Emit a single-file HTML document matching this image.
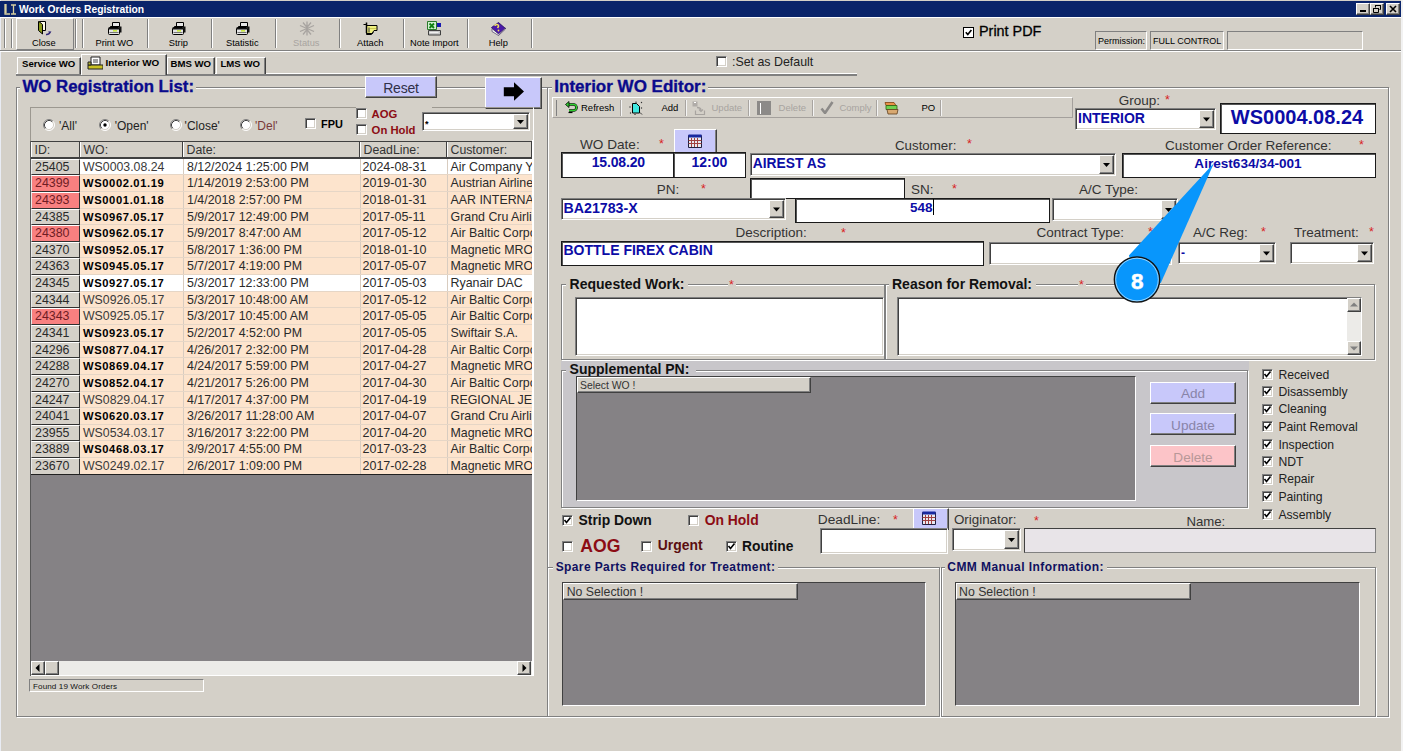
<!DOCTYPE html><html><head><meta charset="utf-8"><style>
html,body{margin:0;padding:0}
body{width:1403px;height:751px;overflow:hidden;position:relative;background:#d4d0c8;font-family:"Liberation Sans",sans-serif}
body div, body span, body svg{position:absolute}
.t{white-space:pre}
</style></head><body>
<div style="left:0px;top:0px;width:1403px;height:751px;background:#d4d0c8"></div>
<div style="left:1401px;top:0px;width:2px;height:751px;background:#f2f2f2"></div>
<div style="left:0px;top:0px;width:1px;height:751px;background:#e9ecf4"></div>
<div style="left:0px;top:1px;width:1401px;height:16px;background:#0a246a"></div>
<svg style="left:3px;top:2px" width="14" height="14"><path d="M2 2v10h5 M3 2v9 M8 3h5 M10.5 3v9 M8 12h5" stroke="#d8d0a0" stroke-width="1.3" fill="none"/></svg>
<span class="t" style="left:19px;top:4px;font-size:10.3px;line-height:12px;font-weight:bold;color:#fff;">Work Orders Registration</span>
<div style="left:1356px;top:3px;width:14px;height:12px;background:#d4d0c8;box-sizing:border-box;border:1px solid;border-color:#fff #404040 #404040 #fff;box-shadow:inset -1px -1px 0 #808080"></div>
<div style="left:1360px;top:10px;width:6px;height:2px;background:#000"></div>
<div style="left:1370px;top:3px;width:14px;height:12px;background:#d4d0c8;box-sizing:border-box;border:1px solid;border-color:#fff #404040 #404040 #fff;box-shadow:inset -1px -1px 0 #808080"></div>
<svg style="left:1370px;top:3px" width="14" height="12"><path d="M5.5 2.5h5v4h-1 M5.5 2.5v2 M3.5 5.5h5v4h-5z" stroke="#000" stroke-width="1" fill="none"/><path d="M5 2h6v1h-6z M3 5h6v1h-6z" fill="#000"/></svg>
<div style="left:1386px;top:3px;width:14px;height:12px;background:#d4d0c8;box-sizing:border-box;border:1px solid;border-color:#fff #404040 #404040 #fff;box-shadow:inset -1px -1px 0 #808080"></div>
<svg style="left:1386px;top:3px" width="14" height="12"><path d="M4 3l6 6 M10 3l-6 6" stroke="#000" stroke-width="1.6"/></svg>
<div style="left:0px;top:17px;width:1401px;height:1px;background:#fff"></div>
<div style="left:0px;top:50px;width:1401px;height:1px;background:#808080"></div>
<div style="left:0px;top:51px;width:1401px;height:1px;background:#fff"></div>
<div style="left:4px;top:19px;width:1px;height:29px;background:#808080"></div>
<div style="left:5px;top:19px;width:1px;height:29px;background:#fff"></div>
<div style="left:11px;top:19px;width:1px;height:29px;background:#808080"></div>
<div style="left:12px;top:19px;width:1px;height:29px;background:#fff"></div>
<div style="left:16px;top:18px;width:58px;height:32px;box-sizing:border-box;border:1px solid;border-color:#fff #808080 #808080 #fff"></div>
<div style="left:75px;top:19px;width:1px;height:29px;background:#808080"></div>
<div style="left:76px;top:19px;width:1px;height:29px;background:#fff"></div>
<div style="left:82px;top:19px;width:1px;height:29px;background:#808080"></div>
<div style="left:83px;top:19px;width:1px;height:29px;background:#fff"></div>
<div style="left:147px;top:19px;width:1px;height:29px;background:#808080"></div>
<div style="left:148px;top:19px;width:1px;height:29px;background:#fff"></div>
<div style="left:211px;top:19px;width:1px;height:29px;background:#808080"></div>
<div style="left:212px;top:19px;width:1px;height:29px;background:#fff"></div>
<div style="left:275px;top:19px;width:1px;height:29px;background:#808080"></div>
<div style="left:276px;top:19px;width:1px;height:29px;background:#fff"></div>
<div style="left:339px;top:19px;width:1px;height:29px;background:#808080"></div>
<div style="left:340px;top:19px;width:1px;height:29px;background:#fff"></div>
<div style="left:403px;top:19px;width:1px;height:29px;background:#808080"></div>
<div style="left:404px;top:19px;width:1px;height:29px;background:#fff"></div>
<div style="left:467px;top:19px;width:1px;height:29px;background:#808080"></div>
<div style="left:468px;top:19px;width:1px;height:29px;background:#fff"></div>
<div style="left:531px;top:19px;width:1px;height:29px;background:#808080"></div>
<div style="left:532px;top:19px;width:1px;height:29px;background:#fff"></div>
<span class="t" style="left:-156.2px;width:400px;text-align:center;top:38px;font-size:9.3px;line-height:11px;font-weight:normal;color:#000;">Close</span>
<span class="t" style="left:-85.7px;width:400px;text-align:center;top:38px;font-size:9.3px;line-height:11px;font-weight:normal;color:#000;">Print WO</span>
<span class="t" style="left:-21.69999999999999px;width:400px;text-align:center;top:38px;font-size:9.3px;line-height:11px;font-weight:normal;color:#000;">Strip</span>
<span class="t" style="left:42.30000000000001px;width:400px;text-align:center;top:38px;font-size:9.3px;line-height:11px;font-weight:normal;color:#000;">Statistic</span>
<span class="t" style="left:106.30000000000001px;width:400px;text-align:center;top:38px;font-size:9.3px;line-height:11px;font-weight:normal;color:#a8a4a0;">Status</span>
<span class="t" style="left:170.3px;width:400px;text-align:center;top:38px;font-size:9.3px;line-height:11px;font-weight:normal;color:#000;">Attach</span>
<span class="t" style="left:234.3px;width:400px;text-align:center;top:38px;font-size:9.3px;line-height:11px;font-weight:normal;color:#000;">Note Import</span>
<span class="t" style="left:298.3px;width:400px;text-align:center;top:38px;font-size:9.3px;line-height:11px;font-weight:normal;color:#000;">Help</span>
<svg style="left:37px;top:20px" width="16" height="16"><path d="M2.5 1.5h6v9h-6z" fill="#fffbe8" stroke="#000"/><path d="M2 1.5 L5.5 4.5 V14 L1.5 10.5 V1.5z" fill="#8a9a18" stroke="#000"/><path d="M9 14.5c2.2 0.3 3.8-0.8 3.8-2.8" stroke="#302878" stroke-width="1.6" fill="none"/><path d="M11 11.5h3.5l-1.7 2z" fill="#302878"/></svg>
<svg style="left:107px;top:21px" width="16" height="15"><path d="M5.5 1.5h7v4h-7z" fill="#e8e8e8" stroke="#000"/><path d="M3.5 5.5h9l1 1.5h-11z" fill="#8a8a8a" stroke="#000"/><rect x="1.5" y="6.5" width="11" height="7" rx="1" fill="#e4e4e4" stroke="#000"/><path d="M2 7h10v1.5h-10z" fill="#111"/><path d="M6 9h4v1.6h-4z" fill="#c8e840"/><path d="M2.5 11.5h9" stroke="#777"/><path d="M12.5 5.5h2v6h-2z" fill="#111"/></svg>
<svg style="left:171px;top:21px" width="16" height="15"><path d="M5.5 1.5h7v4h-7z" fill="#e8e8e8" stroke="#000"/><path d="M3.5 5.5h9l1 1.5h-11z" fill="#8a8a8a" stroke="#000"/><rect x="1.5" y="6.5" width="11" height="7" rx="1" fill="#e4e4e4" stroke="#000"/><path d="M2 7h10v1.5h-10z" fill="#111"/><path d="M6 9h4v1.6h-4z" fill="#c8e840"/><path d="M2.5 11.5h9" stroke="#777"/><path d="M12.5 5.5h2v6h-2z" fill="#111"/></svg>
<svg style="left:235px;top:21px" width="16" height="15"><path d="M5.5 1.5h7v4h-7z" fill="#e8e8e8" stroke="#000"/><path d="M3.5 5.5h9l1 1.5h-11z" fill="#8a8a8a" stroke="#000"/><rect x="1.5" y="6.5" width="11" height="7" rx="1" fill="#e4e4e4" stroke="#000"/><path d="M2 7h10v1.5h-10z" fill="#111"/><path d="M6 9h4v1.6h-4z" fill="#c8e840"/><path d="M2.5 11.5h9" stroke="#777"/><path d="M12.5 5.5h2v6h-2z" fill="#111"/></svg>
<svg style="left:299px;top:21px" width="16" height="15"><path d="M8 0.5v14 M1 4.5l14 6 M15 4.5l-14 6 M4 1.5l4 5 4-5 M4 13.5l4-5 4 5" stroke="#a8a4a0" stroke-width="1.3" fill="none"/></svg>
<svg style="left:363px;top:21px" width="15" height="15"><path d="M0.5 3.5h3v10h5l2-2" fill="#d8d8c0" stroke="#000"/><path d="M3.5 4.5h10.5v5h-3l-2 3h-5.5z" fill="#f0f080" stroke="#000"/><path d="M3.5 1.5v10.5" stroke="#000" stroke-width="1.5"/><path d="M6 6.5v5" stroke="#707050" stroke-width="1.5"/><path d="M7 7.5h6" stroke="#c8c850"/></svg>
<svg style="left:427px;top:21px" width="15" height="15"><path d="M1.5 9.5h12v4.5h-12z" fill="#c8c8c8" stroke="#404040"/><path d="M2.5 11.5h9" stroke="#f0f0f0"/><path d="M9 2h5v4h-5z" fill="#1818b0"/><path d="M0.5 0.5h9v8h-9z" fill="#d0f0d0" stroke="#2a7a2a"/><path d="M2.5 2.5l4.5 4.5 M7 2.5l-4.5 4.5" stroke="#108010" stroke-width="1.8"/></svg>
<svg style="left:491px;top:21px" width="16" height="15"><path d="M0.5 6.5l7-5 7 6-7 6.5z" fill="#4a18a8" stroke="#200860" stroke-width="0.8"/><path d="M1 7.5v3l6.5 4 7-6.5v-1l-7 6z" fill="#f0f0f0" stroke="#302050" stroke-width="0.6"/><path d="M4 5c0-2 4-2 3.5 0.5l-1 1.5" stroke="#f0e060" stroke-width="1.5" fill="none"/><circle cx="7.5" cy="9.5" r="0.9" fill="#f0e060"/></svg>
<div style="left:963px;top:27px;width:11px;height:11px;box-sizing:border-box;border:1.5px solid #000;background:#fff"></div>
<svg style="left:963px;top:27px" width="11" height="11"><path d="M2.8 5.2 L4.8 7.6 L8.4 3" stroke="#000" stroke-width="1.6" fill="none"/></svg>
<span class="t" style="left:979px;top:23px;font-size:14.4px;line-height:17px;font-weight:normal;color:#000;-webkit-text-stroke:0.3px #000">Print PDF</span>
<div style="left:1095px;top:31px;width:52px;height:19px;box-sizing:border-box;border:1px solid;border-color:#808080 #fff #fff #808080"></div>
<span class="t" style="left:1098px;top:36px;font-size:9px;line-height:11px;font-weight:normal;color:#000;">Permission:</span>
<div style="left:1150px;top:31px;width:74px;height:19px;box-sizing:border-box;border:1px solid;border-color:#808080 #fff #fff #808080"></div>
<span class="t" style="left:1153px;top:36px;font-size:9px;line-height:11px;font-weight:normal;color:#000;">FULL CONTROL</span>
<div style="left:1227px;top:31px;width:136px;height:19px;box-sizing:border-box;border:1px solid;border-color:#808080 #fff #fff #808080"></div>
<div style="left:16px;top:73px;width:841px;height:1px;background:#fff"></div>
<div style="left:16px;top:74px;width:841px;height:2px;background:#808080"></div>
<div style="left:17px;top:57px;width:64px;height:17px;background:#d4d0c8;box-sizing:border-box;border:1px solid;border-bottom:none;border-color:#fff #404040 #404040 #fff;box-shadow:inset -1px 0 0 #808080"></div>
<div style="left:167px;top:57px;width:48px;height:17px;background:#d4d0c8;box-sizing:border-box;border:1px solid;border-bottom:none;border-color:#fff #404040 #404040 #fff;box-shadow:inset -1px 0 0 #808080"></div>
<div style="left:216px;top:57px;width:50px;height:17px;background:#d4d0c8;box-sizing:border-box;border:1px solid;border-bottom:none;border-color:#fff #404040 #404040 #fff;box-shadow:inset -1px 0 0 #808080"></div>
<div style="left:81px;top:54px;width:86px;height:21px;background:#d4d0c8;box-sizing:border-box;border:1px solid;border-bottom:none;border-color:#fff #404040 #404040 #fff;box-shadow:inset -1px 0 0 #808080"></div>
<span class="t" style="left:22px;top:58px;font-size:9.6px;line-height:12px;font-weight:bold;color:#000;">Service WO</span>
<span class="t" style="left:105.5px;top:57px;font-size:9.9px;line-height:12px;font-weight:bold;color:#000;">Interior WO</span>
<span class="t" style="left:170.5px;top:58px;font-size:9.6px;line-height:12px;font-weight:bold;color:#000;">BMS WO</span>
<span class="t" style="left:220.5px;top:58px;font-size:9.6px;line-height:12px;font-weight:bold;color:#000;">LMS WO</span>
<svg style="left:87px;top:56px" width="16" height="15"><path d="M4 1h9v8h-9z" fill="#fff" stroke="#202020"/><path d="M6 3h5v4h-5z" fill="#a0a0a0"/><path d="M1 9h15v4h-15z" fill="#c8c020" stroke="#202020"/><path d="M1 6h3v3h-3z" fill="#b0b030" stroke="#202020"/></svg>
<div style="left:716px;top:56px;width:11px;height:11px;background:#fff;box-sizing:border-box;border:1px solid;border-color:#808080 #fff #fff #808080;box-shadow:inset 1px 1px 0 #404040, inset -1px -1px 0 #d4d0c8"></div>
<span class="t" style="left:732px;top:55px;font-size:12.4px;line-height:15px;font-weight:normal;color:#222;">:Set as Default</span>
<div style="left:16px;top:87px;width:532px;height:630px;box-sizing:border-box;border:1px solid #808080;box-shadow:1px 1px 0 #fff, inset 1px 1px 0 #fff"></div>
<div style="left:20px;top:76px;width:176px;height:16px;background:#d4d0c8"></div>
<span class="t" style="left:22.5px;top:77px;font-size:16.8px;line-height:20px;font-weight:bold;color:#0a0a8c;-webkit-text-stroke:0.35px #0a0a8c">WO Registration List:</span>
<div style="left:365px;top:76px;width:72px;height:22px;background:#c8c8fa;box-sizing:border-box;border:1px solid;border-color:#fff #404040 #404040 #fff;box-shadow:inset -1px -1px 0 #808080"></div>
<span class="t" style="left:201px;width:400px;text-align:center;top:80px;font-size:14px;line-height:17px;font-weight:normal;color:#303048;letter-spacing:-0.2px">Reset</span>
<div style="left:485px;top:77px;width:57px;height:32px;background:#c8c8fa;box-sizing:border-box;border:1px solid;border-color:#fff #404040 #404040 #fff;box-shadow:inset -1px -1px 0 #808080"></div>
<svg style="left:500px;top:82px" width="26" height="22"><path d="M3.8 5.2h10.2v-5l10 9.4-10 9.2v-4.6h-10.2z" fill="#000"/></svg>
<div style="left:30px;top:107px;width:504px;height:569px;box-sizing:border-box;border:1px solid;border-color:#9c9890 #fff #fff #9c9890"></div>
<svg style="left:43px;top:119px" width="12" height="12"><circle cx="6" cy="6" r="5" fill="#fff"/><path d="M2.11 9.89 A5.5 5.5 0 0 1 9.89 2.11" stroke="#808080" fill="none"/><path d="M9.89 2.11 A5.5 5.5 0 0 1 2.11 9.89" stroke="#fff" fill="none"/><path d="M2.82 9.18 A4.5 4.5 0 0 1 9.18 2.82" stroke="#404040" fill="none"/><path d="M9.18 2.82 A4.5 4.5 0 0 1 2.82 9.18" stroke="#d4d0c8" fill="none"/></svg>
<span class="t" style="left:59px;top:119px;font-size:12px;line-height:14px;font-weight:normal;color:#222;">'All'</span>
<svg style="left:99px;top:119px" width="12" height="12"><circle cx="6" cy="6" r="5" fill="#fff"/><path d="M2.11 9.89 A5.5 5.5 0 0 1 9.89 2.11" stroke="#808080" fill="none"/><path d="M9.89 2.11 A5.5 5.5 0 0 1 2.11 9.89" stroke="#fff" fill="none"/><path d="M2.82 9.18 A4.5 4.5 0 0 1 9.18 2.82" stroke="#404040" fill="none"/><path d="M9.18 2.82 A4.5 4.5 0 0 1 2.82 9.18" stroke="#d4d0c8" fill="none"/><circle cx="6" cy="6" r="1.7" fill="#000"/></svg>
<span class="t" style="left:114.7px;top:119px;font-size:12px;line-height:14px;font-weight:normal;color:#222;">'Open'</span>
<svg style="left:170px;top:119px" width="12" height="12"><circle cx="6" cy="6" r="5" fill="#fff"/><path d="M2.11 9.89 A5.5 5.5 0 0 1 9.89 2.11" stroke="#808080" fill="none"/><path d="M9.89 2.11 A5.5 5.5 0 0 1 2.11 9.89" stroke="#fff" fill="none"/><path d="M2.82 9.18 A4.5 4.5 0 0 1 9.18 2.82" stroke="#404040" fill="none"/><path d="M9.18 2.82 A4.5 4.5 0 0 1 2.82 9.18" stroke="#d4d0c8" fill="none"/></svg>
<span class="t" style="left:184.6px;top:119px;font-size:12px;line-height:14px;font-weight:normal;color:#222;">'Close'</span>
<svg style="left:240px;top:119px" width="12" height="12"><circle cx="6" cy="6" r="5" fill="#fff"/><path d="M2.11 9.89 A5.5 5.5 0 0 1 9.89 2.11" stroke="#808080" fill="none"/><path d="M9.89 2.11 A5.5 5.5 0 0 1 2.11 9.89" stroke="#fff" fill="none"/><path d="M2.82 9.18 A4.5 4.5 0 0 1 9.18 2.82" stroke="#404040" fill="none"/><path d="M9.18 2.82 A4.5 4.5 0 0 1 2.82 9.18" stroke="#d4d0c8" fill="none"/></svg>
<span class="t" style="left:255px;top:119px;font-size:12px;line-height:14px;font-weight:normal;color:#7a3a3a;">'Del'</span>
<div style="left:356px;top:106px;width:76px;height:2px;background:#d4d0c8"></div>
<div style="left:305px;top:118px;width:11px;height:11px;background:#fff;box-sizing:border-box;border:1px solid;border-color:#808080 #fff #fff #808080;box-shadow:inset 1px 1px 0 #404040, inset -1px -1px 0 #d4d0c8"></div>
<span class="t" style="left:321px;top:118px;font-size:10.9px;line-height:13px;font-weight:bold;color:#000;">FPU</span>
<div style="left:356px;top:108px;width:11px;height:11px;background:#fff;box-sizing:border-box;border:1px solid;border-color:#808080 #fff #fff #808080;box-shadow:inset 1px 1px 0 #404040, inset -1px -1px 0 #d4d0c8"></div>
<span class="t" style="left:371.6px;top:108px;font-size:11.3px;line-height:13px;font-weight:bold;color:#8c0c14;">AOG</span>
<div style="left:356px;top:124px;width:11px;height:11px;background:#fff;box-sizing:border-box;border:1px solid;border-color:#808080 #fff #fff #808080;box-shadow:inset 1px 1px 0 #404040, inset -1px -1px 0 #d4d0c8"></div>
<span class="t" style="left:371.6px;top:124px;font-size:11.3px;line-height:13px;font-weight:bold;color:#8c0c14;">On Hold</span>
<div style="left:422px;top:112px;width:108px;height:19px;background:#fff;box-sizing:border-box;border:1px solid;border-color:#808080 #fff #fff #808080;box-shadow:inset 1px 1px 0 #404040, inset -1px -1px 0 #d4d0c8"></div>
<div style="left:513px;top:114px;width:15px;height:15px;background:#d4d0c8;box-sizing:border-box;border:1px solid;border-color:#fff #404040 #404040 #fff;box-shadow:inset -1px -1px 0 #808080"></div>
<svg style="left:513px;top:114px" width="15" height="15"><path d="M4.0 6.0 h7 l-3.5 4 z" fill="#000"/></svg>
<span class="t" style="left:425px;top:119px;font-size:9px;line-height:11px;font-weight:bold;color:#000;">*</span>
<div style="left:31px;top:141px;width:501px;height:17px;background:#d4d0c8"></div>
<div style="left:31px;top:141px;width:501px;height:1px;background:#404040"></div>
<div style="left:31px;top:142px;width:49px;height:16px;box-sizing:border-box;border-left:1px solid #fff;border-right:1px solid #404040"></div>
<span class="t" style="left:34.5px;top:143px;font-size:12.3px;line-height:15px;font-weight:normal;color:#333;">ID:</span>
<div style="left:80px;top:142px;width:103px;height:16px;box-sizing:border-box;border-left:1px solid #fff;border-right:1px solid #404040"></div>
<span class="t" style="left:83.5px;top:143px;font-size:12.3px;line-height:15px;font-weight:normal;color:#333;">WO:</span>
<div style="left:183px;top:142px;width:177px;height:16px;box-sizing:border-box;border-left:1px solid #fff;border-right:1px solid #404040"></div>
<span class="t" style="left:186.5px;top:143px;font-size:12.3px;line-height:15px;font-weight:normal;color:#333;">Date:</span>
<div style="left:360px;top:142px;width:87px;height:16px;box-sizing:border-box;border-left:1px solid #fff;border-right:1px solid #404040"></div>
<span class="t" style="left:363.5px;top:143px;font-size:12.3px;line-height:15px;font-weight:normal;color:#333;">DeadLine:</span>
<div style="left:447px;top:142px;width:85px;height:16px;box-sizing:border-box;border-left:1px solid #fff;border-right:1px solid #404040"></div>
<span class="t" style="left:450.5px;top:143px;font-size:12.3px;line-height:15px;font-weight:normal;color:#333;">Customer:</span>
<div style="left:31px;top:157px;width:501px;height:2px;background:#404040"></div>
<div style="left:31px;top:159px;width:501px;height:16px;background:#fff"></div>
<div style="left:31px;top:159px;width:49px;height:16px;background:#d4d0c8;box-sizing:border-box;border-top:1px solid #fff;border-left:1px solid #e8e8e8;border-bottom:1px solid #303030;border-right:1px solid #303030"></div>
<div style="left:183px;top:159px;width:1px;height:16px;background:#d8ccc0"></div>
<div style="left:360px;top:159px;width:1px;height:16px;background:#d8ccc0"></div>
<div style="left:447px;top:159px;width:1px;height:16px;background:#d8ccc0"></div>
<div style="left:80px;top:174px;width:452px;height:1px;background:#e6d6c6"></div>
<span class="t" style="left:35px;top:160px;font-size:12.4px;line-height:15px;font-weight:normal;color:#2a2a2a;">25405</span>
<span class="t" style="left:83px;top:160px;font-size:12.3px;line-height:15px;font-weight:normal;color:#3a3a3a;">WS0003.08.24</span>
<span class="t" style="left:187px;top:160px;font-size:12.4px;line-height:15px;font-weight:normal;color:#2a2a2a;">8/12/2024 1:25:00 PM</span>
<span class="t" style="left:362.5px;top:160px;font-size:12.5px;line-height:15px;font-weight:normal;color:#2a2a2a;">2024-08-31</span>
<span class="t" style="left:450.5px;top:160px;font-size:12.4px;line-height:15px;font-weight:normal;color:#2a2a2a;">Air Company Y</span>
<div style="left:31px;top:175px;width:501px;height:17px;background:#fde4cd"></div>
<div style="left:31px;top:175px;width:49px;height:17px;background:#f88080;box-sizing:border-box;border-top:1px solid #fff;border-left:1px solid #e8e8e8;border-bottom:1px solid #303030;border-right:1px solid #303030"></div>
<div style="left:183px;top:175px;width:1px;height:17px;background:#d8ccc0"></div>
<div style="left:360px;top:175px;width:1px;height:17px;background:#d8ccc0"></div>
<div style="left:447px;top:175px;width:1px;height:17px;background:#d8ccc0"></div>
<div style="left:80px;top:191px;width:452px;height:1px;background:#e6d6c6"></div>
<span class="t" style="left:35px;top:176px;font-size:12.4px;line-height:15px;font-weight:normal;color:#6e1c24;">24399</span>
<span class="t" style="left:83px;top:177px;font-size:11.2px;line-height:13px;font-weight:bold;color:#000;letter-spacing:0.62px">WS0002.01.19</span>
<span class="t" style="left:187px;top:176px;font-size:12.4px;line-height:15px;font-weight:normal;color:#2a2a2a;">1/14/2019 2:53:00 PM</span>
<span class="t" style="left:362.5px;top:176px;font-size:12.5px;line-height:15px;font-weight:normal;color:#2a2a2a;">2019-01-30</span>
<span class="t" style="left:450.5px;top:176px;font-size:12.4px;line-height:15px;font-weight:normal;color:#2a2a2a;">Austrian Airline</span>
<div style="left:31px;top:192px;width:501px;height:17px;background:#fde4cd"></div>
<div style="left:31px;top:192px;width:49px;height:17px;background:#f88080;box-sizing:border-box;border-top:1px solid #fff;border-left:1px solid #e8e8e8;border-bottom:1px solid #303030;border-right:1px solid #303030"></div>
<div style="left:183px;top:192px;width:1px;height:17px;background:#d8ccc0"></div>
<div style="left:360px;top:192px;width:1px;height:17px;background:#d8ccc0"></div>
<div style="left:447px;top:192px;width:1px;height:17px;background:#d8ccc0"></div>
<div style="left:80px;top:208px;width:452px;height:1px;background:#e6d6c6"></div>
<span class="t" style="left:35px;top:193px;font-size:12.4px;line-height:15px;font-weight:normal;color:#6e1c24;">24393</span>
<span class="t" style="left:83px;top:194px;font-size:11.2px;line-height:13px;font-weight:bold;color:#000;letter-spacing:0.62px">WS0001.01.18</span>
<span class="t" style="left:187px;top:193px;font-size:12.4px;line-height:15px;font-weight:normal;color:#2a2a2a;">1/4/2018 2:57:00 PM</span>
<span class="t" style="left:362.5px;top:193px;font-size:12.5px;line-height:15px;font-weight:normal;color:#2a2a2a;">2018-01-31</span>
<span class="t" style="left:450.5px;top:193px;font-size:12.4px;line-height:15px;font-weight:normal;color:#2a2a2a;">AAR INTERNAT</span>
<div style="left:31px;top:209px;width:501px;height:16px;background:#fde4cd"></div>
<div style="left:31px;top:209px;width:49px;height:16px;background:#d4d0c8;box-sizing:border-box;border-top:1px solid #fff;border-left:1px solid #e8e8e8;border-bottom:1px solid #303030;border-right:1px solid #303030"></div>
<div style="left:183px;top:209px;width:1px;height:16px;background:#d8ccc0"></div>
<div style="left:360px;top:209px;width:1px;height:16px;background:#d8ccc0"></div>
<div style="left:447px;top:209px;width:1px;height:16px;background:#d8ccc0"></div>
<div style="left:80px;top:224px;width:452px;height:1px;background:#e6d6c6"></div>
<span class="t" style="left:35px;top:210px;font-size:12.4px;line-height:15px;font-weight:normal;color:#2a2a2a;">24385</span>
<span class="t" style="left:83px;top:211px;font-size:11.2px;line-height:13px;font-weight:bold;color:#000;letter-spacing:0.62px">WS0967.05.17</span>
<span class="t" style="left:187px;top:210px;font-size:12.4px;line-height:15px;font-weight:normal;color:#2a2a2a;">5/9/2017 12:49:00 PM</span>
<span class="t" style="left:362.5px;top:210px;font-size:12.5px;line-height:15px;font-weight:normal;color:#2a2a2a;">2017-05-11</span>
<span class="t" style="left:450.5px;top:210px;font-size:12.4px;line-height:15px;font-weight:normal;color:#2a2a2a;">Grand Cru Airli</span>
<div style="left:31px;top:225px;width:501px;height:17px;background:#fde4cd"></div>
<div style="left:31px;top:225px;width:49px;height:17px;background:#f88080;box-sizing:border-box;border-top:1px solid #fff;border-left:1px solid #e8e8e8;border-bottom:1px solid #303030;border-right:1px solid #303030"></div>
<div style="left:183px;top:225px;width:1px;height:17px;background:#d8ccc0"></div>
<div style="left:360px;top:225px;width:1px;height:17px;background:#d8ccc0"></div>
<div style="left:447px;top:225px;width:1px;height:17px;background:#d8ccc0"></div>
<div style="left:80px;top:241px;width:452px;height:1px;background:#e6d6c6"></div>
<span class="t" style="left:35px;top:226px;font-size:12.4px;line-height:15px;font-weight:normal;color:#6e1c24;">24380</span>
<span class="t" style="left:83px;top:227px;font-size:11.2px;line-height:13px;font-weight:bold;color:#000;letter-spacing:0.62px">WS0962.05.17</span>
<span class="t" style="left:187px;top:226px;font-size:12.4px;line-height:15px;font-weight:normal;color:#2a2a2a;">5/9/2017 8:47:00 AM</span>
<span class="t" style="left:362.5px;top:226px;font-size:12.5px;line-height:15px;font-weight:normal;color:#2a2a2a;">2017-05-12</span>
<span class="t" style="left:450.5px;top:226px;font-size:12.4px;line-height:15px;font-weight:normal;color:#2a2a2a;">Air Baltic Corpo</span>
<div style="left:31px;top:242px;width:501px;height:16px;background:#fde4cd"></div>
<div style="left:31px;top:242px;width:49px;height:16px;background:#d4d0c8;box-sizing:border-box;border-top:1px solid #fff;border-left:1px solid #e8e8e8;border-bottom:1px solid #303030;border-right:1px solid #303030"></div>
<div style="left:183px;top:242px;width:1px;height:16px;background:#d8ccc0"></div>
<div style="left:360px;top:242px;width:1px;height:16px;background:#d8ccc0"></div>
<div style="left:447px;top:242px;width:1px;height:16px;background:#d8ccc0"></div>
<div style="left:80px;top:257px;width:452px;height:1px;background:#e6d6c6"></div>
<span class="t" style="left:35px;top:243px;font-size:12.4px;line-height:15px;font-weight:normal;color:#2a2a2a;">24370</span>
<span class="t" style="left:83px;top:244px;font-size:11.2px;line-height:13px;font-weight:bold;color:#000;letter-spacing:0.62px">WS0952.05.17</span>
<span class="t" style="left:187px;top:243px;font-size:12.4px;line-height:15px;font-weight:normal;color:#2a2a2a;">5/8/2017 1:36:00 PM</span>
<span class="t" style="left:362.5px;top:243px;font-size:12.5px;line-height:15px;font-weight:normal;color:#2a2a2a;">2018-01-10</span>
<span class="t" style="left:450.5px;top:243px;font-size:12.4px;line-height:15px;font-weight:normal;color:#2a2a2a;">Magnetic MRO</span>
<div style="left:31px;top:258px;width:501px;height:17px;background:#fde4cd"></div>
<div style="left:31px;top:258px;width:49px;height:17px;background:#d4d0c8;box-sizing:border-box;border-top:1px solid #fff;border-left:1px solid #e8e8e8;border-bottom:1px solid #303030;border-right:1px solid #303030"></div>
<div style="left:183px;top:258px;width:1px;height:17px;background:#d8ccc0"></div>
<div style="left:360px;top:258px;width:1px;height:17px;background:#d8ccc0"></div>
<div style="left:447px;top:258px;width:1px;height:17px;background:#d8ccc0"></div>
<div style="left:80px;top:274px;width:452px;height:1px;background:#e6d6c6"></div>
<span class="t" style="left:35px;top:259px;font-size:12.4px;line-height:15px;font-weight:normal;color:#2a2a2a;">24363</span>
<span class="t" style="left:83px;top:260px;font-size:11.2px;line-height:13px;font-weight:bold;color:#000;letter-spacing:0.62px">WS0945.05.17</span>
<span class="t" style="left:187px;top:259px;font-size:12.4px;line-height:15px;font-weight:normal;color:#2a2a2a;">5/7/2017 4:19:00 PM</span>
<span class="t" style="left:362.5px;top:259px;font-size:12.5px;line-height:15px;font-weight:normal;color:#2a2a2a;">2017-05-07</span>
<span class="t" style="left:450.5px;top:259px;font-size:12.4px;line-height:15px;font-weight:normal;color:#2a2a2a;">Magnetic MRO</span>
<div style="left:31px;top:275px;width:501px;height:17px;background:#fff"></div>
<div style="left:31px;top:275px;width:49px;height:17px;background:#d4d0c8;box-sizing:border-box;border-top:1px solid #fff;border-left:1px solid #e8e8e8;border-bottom:1px solid #303030;border-right:1px solid #303030"></div>
<div style="left:183px;top:275px;width:1px;height:17px;background:#d8ccc0"></div>
<div style="left:360px;top:275px;width:1px;height:17px;background:#d8ccc0"></div>
<div style="left:447px;top:275px;width:1px;height:17px;background:#d8ccc0"></div>
<div style="left:80px;top:291px;width:452px;height:1px;background:#e6d6c6"></div>
<span class="t" style="left:35px;top:276px;font-size:12.4px;line-height:15px;font-weight:normal;color:#2a2a2a;">24345</span>
<span class="t" style="left:83px;top:277px;font-size:11.2px;line-height:13px;font-weight:bold;color:#000;letter-spacing:0.62px">WS0927.05.17</span>
<span class="t" style="left:187px;top:276px;font-size:12.4px;line-height:15px;font-weight:normal;color:#2a2a2a;">5/3/2017 12:33:00 PM</span>
<span class="t" style="left:362.5px;top:276px;font-size:12.5px;line-height:15px;font-weight:normal;color:#2a2a2a;">2017-05-03</span>
<span class="t" style="left:450.5px;top:276px;font-size:12.4px;line-height:15px;font-weight:normal;color:#2a2a2a;">Ryanair DAC</span>
<div style="left:31px;top:292px;width:501px;height:16px;background:#fde4cd"></div>
<div style="left:31px;top:292px;width:49px;height:16px;background:#d4d0c8;box-sizing:border-box;border-top:1px solid #fff;border-left:1px solid #e8e8e8;border-bottom:1px solid #303030;border-right:1px solid #303030"></div>
<div style="left:183px;top:292px;width:1px;height:16px;background:#d8ccc0"></div>
<div style="left:360px;top:292px;width:1px;height:16px;background:#d8ccc0"></div>
<div style="left:447px;top:292px;width:1px;height:16px;background:#d8ccc0"></div>
<div style="left:80px;top:307px;width:452px;height:1px;background:#e6d6c6"></div>
<span class="t" style="left:35px;top:293px;font-size:12.4px;line-height:15px;font-weight:normal;color:#2a2a2a;">24344</span>
<span class="t" style="left:83px;top:293px;font-size:12.3px;line-height:15px;font-weight:normal;color:#3a3a3a;">WS0926.05.17</span>
<span class="t" style="left:187px;top:293px;font-size:12.4px;line-height:15px;font-weight:normal;color:#2a2a2a;">5/3/2017 10:48:00 AM</span>
<span class="t" style="left:362.5px;top:293px;font-size:12.5px;line-height:15px;font-weight:normal;color:#2a2a2a;">2017-05-12</span>
<span class="t" style="left:450.5px;top:293px;font-size:12.4px;line-height:15px;font-weight:normal;color:#2a2a2a;">Air Baltic Corpo</span>
<div style="left:31px;top:308px;width:501px;height:17px;background:#fde4cd"></div>
<div style="left:31px;top:308px;width:49px;height:17px;background:#f88080;box-sizing:border-box;border-top:1px solid #fff;border-left:1px solid #e8e8e8;border-bottom:1px solid #303030;border-right:1px solid #303030"></div>
<div style="left:183px;top:308px;width:1px;height:17px;background:#d8ccc0"></div>
<div style="left:360px;top:308px;width:1px;height:17px;background:#d8ccc0"></div>
<div style="left:447px;top:308px;width:1px;height:17px;background:#d8ccc0"></div>
<div style="left:80px;top:324px;width:452px;height:1px;background:#e6d6c6"></div>
<span class="t" style="left:35px;top:309px;font-size:12.4px;line-height:15px;font-weight:normal;color:#6e1c24;">24343</span>
<span class="t" style="left:83px;top:309px;font-size:12.3px;line-height:15px;font-weight:normal;color:#3a3a3a;">WS0925.05.17</span>
<span class="t" style="left:187px;top:309px;font-size:12.4px;line-height:15px;font-weight:normal;color:#2a2a2a;">5/3/2017 10:45:00 AM</span>
<span class="t" style="left:362.5px;top:309px;font-size:12.5px;line-height:15px;font-weight:normal;color:#2a2a2a;">2017-05-05</span>
<span class="t" style="left:450.5px;top:309px;font-size:12.4px;line-height:15px;font-weight:normal;color:#2a2a2a;">Air Baltic Corpo</span>
<div style="left:31px;top:325px;width:501px;height:17px;background:#fde4cd"></div>
<div style="left:31px;top:325px;width:49px;height:17px;background:#d4d0c8;box-sizing:border-box;border-top:1px solid #fff;border-left:1px solid #e8e8e8;border-bottom:1px solid #303030;border-right:1px solid #303030"></div>
<div style="left:183px;top:325px;width:1px;height:17px;background:#d8ccc0"></div>
<div style="left:360px;top:325px;width:1px;height:17px;background:#d8ccc0"></div>
<div style="left:447px;top:325px;width:1px;height:17px;background:#d8ccc0"></div>
<div style="left:80px;top:341px;width:452px;height:1px;background:#e6d6c6"></div>
<span class="t" style="left:35px;top:326px;font-size:12.4px;line-height:15px;font-weight:normal;color:#2a2a2a;">24341</span>
<span class="t" style="left:83px;top:327px;font-size:11.2px;line-height:13px;font-weight:bold;color:#000;letter-spacing:0.62px">WS0923.05.17</span>
<span class="t" style="left:187px;top:326px;font-size:12.4px;line-height:15px;font-weight:normal;color:#2a2a2a;">5/2/2017 4:52:00 PM</span>
<span class="t" style="left:362.5px;top:326px;font-size:12.5px;line-height:15px;font-weight:normal;color:#2a2a2a;">2017-05-05</span>
<span class="t" style="left:450.5px;top:326px;font-size:12.4px;line-height:15px;font-weight:normal;color:#2a2a2a;">Swiftair S.A.</span>
<div style="left:31px;top:342px;width:501px;height:16px;background:#fde4cd"></div>
<div style="left:31px;top:342px;width:49px;height:16px;background:#d4d0c8;box-sizing:border-box;border-top:1px solid #fff;border-left:1px solid #e8e8e8;border-bottom:1px solid #303030;border-right:1px solid #303030"></div>
<div style="left:183px;top:342px;width:1px;height:16px;background:#d8ccc0"></div>
<div style="left:360px;top:342px;width:1px;height:16px;background:#d8ccc0"></div>
<div style="left:447px;top:342px;width:1px;height:16px;background:#d8ccc0"></div>
<div style="left:80px;top:357px;width:452px;height:1px;background:#e6d6c6"></div>
<span class="t" style="left:35px;top:343px;font-size:12.4px;line-height:15px;font-weight:normal;color:#2a2a2a;">24296</span>
<span class="t" style="left:83px;top:344px;font-size:11.2px;line-height:13px;font-weight:bold;color:#000;letter-spacing:0.62px">WS0877.04.17</span>
<span class="t" style="left:187px;top:343px;font-size:12.4px;line-height:15px;font-weight:normal;color:#2a2a2a;">4/26/2017 2:32:00 PM</span>
<span class="t" style="left:362.5px;top:343px;font-size:12.5px;line-height:15px;font-weight:normal;color:#2a2a2a;">2017-04-28</span>
<span class="t" style="left:450.5px;top:343px;font-size:12.4px;line-height:15px;font-weight:normal;color:#2a2a2a;">Air Baltic Corpo</span>
<div style="left:31px;top:358px;width:501px;height:17px;background:#fde4cd"></div>
<div style="left:31px;top:358px;width:49px;height:17px;background:#d4d0c8;box-sizing:border-box;border-top:1px solid #fff;border-left:1px solid #e8e8e8;border-bottom:1px solid #303030;border-right:1px solid #303030"></div>
<div style="left:183px;top:358px;width:1px;height:17px;background:#d8ccc0"></div>
<div style="left:360px;top:358px;width:1px;height:17px;background:#d8ccc0"></div>
<div style="left:447px;top:358px;width:1px;height:17px;background:#d8ccc0"></div>
<div style="left:80px;top:374px;width:452px;height:1px;background:#e6d6c6"></div>
<span class="t" style="left:35px;top:359px;font-size:12.4px;line-height:15px;font-weight:normal;color:#2a2a2a;">24288</span>
<span class="t" style="left:83px;top:360px;font-size:11.2px;line-height:13px;font-weight:bold;color:#000;letter-spacing:0.62px">WS0869.04.17</span>
<span class="t" style="left:187px;top:359px;font-size:12.4px;line-height:15px;font-weight:normal;color:#2a2a2a;">4/24/2017 5:59:00 PM</span>
<span class="t" style="left:362.5px;top:359px;font-size:12.5px;line-height:15px;font-weight:normal;color:#2a2a2a;">2017-04-27</span>
<span class="t" style="left:450.5px;top:359px;font-size:12.4px;line-height:15px;font-weight:normal;color:#2a2a2a;">Magnetic MRO</span>
<div style="left:31px;top:375px;width:501px;height:17px;background:#fde4cd"></div>
<div style="left:31px;top:375px;width:49px;height:17px;background:#d4d0c8;box-sizing:border-box;border-top:1px solid #fff;border-left:1px solid #e8e8e8;border-bottom:1px solid #303030;border-right:1px solid #303030"></div>
<div style="left:183px;top:375px;width:1px;height:17px;background:#d8ccc0"></div>
<div style="left:360px;top:375px;width:1px;height:17px;background:#d8ccc0"></div>
<div style="left:447px;top:375px;width:1px;height:17px;background:#d8ccc0"></div>
<div style="left:80px;top:391px;width:452px;height:1px;background:#e6d6c6"></div>
<span class="t" style="left:35px;top:376px;font-size:12.4px;line-height:15px;font-weight:normal;color:#2a2a2a;">24270</span>
<span class="t" style="left:83px;top:377px;font-size:11.2px;line-height:13px;font-weight:bold;color:#000;letter-spacing:0.62px">WS0852.04.17</span>
<span class="t" style="left:187px;top:376px;font-size:12.4px;line-height:15px;font-weight:normal;color:#2a2a2a;">4/21/2017 5:26:00 PM</span>
<span class="t" style="left:362.5px;top:376px;font-size:12.5px;line-height:15px;font-weight:normal;color:#2a2a2a;">2017-04-30</span>
<span class="t" style="left:450.5px;top:376px;font-size:12.4px;line-height:15px;font-weight:normal;color:#2a2a2a;">Air Baltic Corpo</span>
<div style="left:31px;top:392px;width:501px;height:16px;background:#fde4cd"></div>
<div style="left:31px;top:392px;width:49px;height:16px;background:#d4d0c8;box-sizing:border-box;border-top:1px solid #fff;border-left:1px solid #e8e8e8;border-bottom:1px solid #303030;border-right:1px solid #303030"></div>
<div style="left:183px;top:392px;width:1px;height:16px;background:#d8ccc0"></div>
<div style="left:360px;top:392px;width:1px;height:16px;background:#d8ccc0"></div>
<div style="left:447px;top:392px;width:1px;height:16px;background:#d8ccc0"></div>
<div style="left:80px;top:407px;width:452px;height:1px;background:#e6d6c6"></div>
<span class="t" style="left:35px;top:393px;font-size:12.4px;line-height:15px;font-weight:normal;color:#2a2a2a;">24247</span>
<span class="t" style="left:83px;top:393px;font-size:12.3px;line-height:15px;font-weight:normal;color:#3a3a3a;">WS0829.04.17</span>
<span class="t" style="left:187px;top:393px;font-size:12.4px;line-height:15px;font-weight:normal;color:#2a2a2a;">4/17/2017 4:37:00 PM</span>
<span class="t" style="left:362.5px;top:393px;font-size:12.5px;line-height:15px;font-weight:normal;color:#2a2a2a;">2017-04-19</span>
<span class="t" style="left:450.5px;top:393px;font-size:12.4px;line-height:15px;font-weight:normal;color:#2a2a2a;">REGIONAL JET</span>
<div style="left:31px;top:408px;width:501px;height:17px;background:#fde4cd"></div>
<div style="left:31px;top:408px;width:49px;height:17px;background:#d4d0c8;box-sizing:border-box;border-top:1px solid #fff;border-left:1px solid #e8e8e8;border-bottom:1px solid #303030;border-right:1px solid #303030"></div>
<div style="left:183px;top:408px;width:1px;height:17px;background:#d8ccc0"></div>
<div style="left:360px;top:408px;width:1px;height:17px;background:#d8ccc0"></div>
<div style="left:447px;top:408px;width:1px;height:17px;background:#d8ccc0"></div>
<div style="left:80px;top:424px;width:452px;height:1px;background:#e6d6c6"></div>
<span class="t" style="left:35px;top:409px;font-size:12.4px;line-height:15px;font-weight:normal;color:#2a2a2a;">24041</span>
<span class="t" style="left:83px;top:410px;font-size:11.2px;line-height:13px;font-weight:bold;color:#000;letter-spacing:0.62px">WS0620.03.17</span>
<span class="t" style="left:187px;top:409px;font-size:12.4px;line-height:15px;font-weight:normal;color:#2a2a2a;">3/26/2017 11:28:00 AM</span>
<span class="t" style="left:362.5px;top:409px;font-size:12.5px;line-height:15px;font-weight:normal;color:#2a2a2a;">2017-04-07</span>
<span class="t" style="left:450.5px;top:409px;font-size:12.4px;line-height:15px;font-weight:normal;color:#2a2a2a;">Grand Cru Airli</span>
<div style="left:31px;top:425px;width:501px;height:16px;background:#fde4cd"></div>
<div style="left:31px;top:425px;width:49px;height:16px;background:#d4d0c8;box-sizing:border-box;border-top:1px solid #fff;border-left:1px solid #e8e8e8;border-bottom:1px solid #303030;border-right:1px solid #303030"></div>
<div style="left:183px;top:425px;width:1px;height:16px;background:#d8ccc0"></div>
<div style="left:360px;top:425px;width:1px;height:16px;background:#d8ccc0"></div>
<div style="left:447px;top:425px;width:1px;height:16px;background:#d8ccc0"></div>
<div style="left:80px;top:440px;width:452px;height:1px;background:#e6d6c6"></div>
<span class="t" style="left:35px;top:426px;font-size:12.4px;line-height:15px;font-weight:normal;color:#2a2a2a;">23955</span>
<span class="t" style="left:83px;top:426px;font-size:12.3px;line-height:15px;font-weight:normal;color:#3a3a3a;">WS0534.03.17</span>
<span class="t" style="left:187px;top:426px;font-size:12.4px;line-height:15px;font-weight:normal;color:#2a2a2a;">3/16/2017 3:22:00 PM</span>
<span class="t" style="left:362.5px;top:426px;font-size:12.5px;line-height:15px;font-weight:normal;color:#2a2a2a;">2017-04-20</span>
<span class="t" style="left:450.5px;top:426px;font-size:12.4px;line-height:15px;font-weight:normal;color:#2a2a2a;">Magnetic MRO</span>
<div style="left:31px;top:441px;width:501px;height:17px;background:#fde4cd"></div>
<div style="left:31px;top:441px;width:49px;height:17px;background:#d4d0c8;box-sizing:border-box;border-top:1px solid #fff;border-left:1px solid #e8e8e8;border-bottom:1px solid #303030;border-right:1px solid #303030"></div>
<div style="left:183px;top:441px;width:1px;height:17px;background:#d8ccc0"></div>
<div style="left:360px;top:441px;width:1px;height:17px;background:#d8ccc0"></div>
<div style="left:447px;top:441px;width:1px;height:17px;background:#d8ccc0"></div>
<div style="left:80px;top:457px;width:452px;height:1px;background:#e6d6c6"></div>
<span class="t" style="left:35px;top:442px;font-size:12.4px;line-height:15px;font-weight:normal;color:#2a2a2a;">23889</span>
<span class="t" style="left:83px;top:443px;font-size:11.2px;line-height:13px;font-weight:bold;color:#000;letter-spacing:0.62px">WS0468.03.17</span>
<span class="t" style="left:187px;top:442px;font-size:12.4px;line-height:15px;font-weight:normal;color:#2a2a2a;">3/9/2017 4:55:00 PM</span>
<span class="t" style="left:362.5px;top:442px;font-size:12.5px;line-height:15px;font-weight:normal;color:#2a2a2a;">2017-03-23</span>
<span class="t" style="left:450.5px;top:442px;font-size:12.4px;line-height:15px;font-weight:normal;color:#2a2a2a;">Air Baltic Corpo</span>
<div style="left:31px;top:458px;width:501px;height:17px;background:#fde4cd"></div>
<div style="left:31px;top:458px;width:49px;height:17px;background:#d4d0c8;box-sizing:border-box;border-top:1px solid #fff;border-left:1px solid #e8e8e8;border-bottom:1px solid #303030;border-right:1px solid #303030"></div>
<div style="left:183px;top:458px;width:1px;height:17px;background:#d8ccc0"></div>
<div style="left:360px;top:458px;width:1px;height:17px;background:#d8ccc0"></div>
<div style="left:447px;top:458px;width:1px;height:17px;background:#d8ccc0"></div>
<div style="left:80px;top:474px;width:452px;height:1px;background:#e6d6c6"></div>
<span class="t" style="left:35px;top:459px;font-size:12.4px;line-height:15px;font-weight:normal;color:#2a2a2a;">23670</span>
<span class="t" style="left:83px;top:459px;font-size:12.3px;line-height:15px;font-weight:normal;color:#3a3a3a;">WS0249.02.17</span>
<span class="t" style="left:187px;top:459px;font-size:12.4px;line-height:15px;font-weight:normal;color:#2a2a2a;">2/6/2017 1:09:00 PM</span>
<span class="t" style="left:362.5px;top:459px;font-size:12.5px;line-height:15px;font-weight:normal;color:#2a2a2a;">2017-02-28</span>
<span class="t" style="left:450.5px;top:459px;font-size:12.4px;line-height:15px;font-weight:normal;color:#2a2a2a;">Magnetic MRO</span>
<div style="left:532px;top:140px;width:2px;height:536px;background:#fff"></div>
<div style="left:534px;top:140px;width:12px;height:536px;background:#d4d0c8"></div>
<div style="left:31px;top:474px;width:501px;height:1px;background:#202020"></div>
<div style="left:30px;top:141px;width:1px;height:535px;background:#585858"></div>
<div style="left:31px;top:475px;width:501px;height:186px;background:#858285"></div>
<div style="left:31px;top:661px;width:501px;height:14px;background:#ecebe8"></div>
<div style="left:31px;top:661px;width:14px;height:14px;background:#d4d0c8;box-sizing:border-box;border:1px solid;border-color:#fff #404040 #404040 #fff;box-shadow:inset -1px -1px 0 #808080"></div>
<svg style="left:31px;top:661px" width="14" height="14"><path d="M4.5 7l4-4v8z" fill="#000"/></svg>
<div style="left:45px;top:661px;width:14px;height:14px;background:#d4d0c8;box-sizing:border-box;border:1px solid;border-color:#fff #404040 #404040 #fff;box-shadow:inset -1px -1px 0 #808080"></div>
<div style="left:517px;top:661px;width:14px;height:14px;background:#d4d0c8;box-sizing:border-box;border:1px solid;border-color:#fff #404040 #404040 #fff;box-shadow:inset -1px -1px 0 #808080"></div>
<svg style="left:517px;top:661px" width="14" height="14"><path d="M9.5 7l-4-4v8z" fill="#000"/></svg>
<div style="left:29px;top:679px;width:175px;height:13px;box-sizing:border-box;border:1px solid;border-color:#808080 #fff #fff #808080"></div>
<span class="t" style="left:33px;top:682px;font-size:8.1px;line-height:10px;font-weight:normal;color:#111;letter-spacing:0.1px">Found 19 Work Orders</span>
<div style="left:547px;top:87px;width:842px;height:630px;box-sizing:border-box;border:1px solid #808080;box-shadow:1px 1px 0 #fff, inset 1px 1px 0 #fff"></div>
<div style="left:552px;top:78px;width:156px;height:16px;background:#d4d0c8"></div>
<span class="t" style="left:554.3px;top:77px;font-size:17px;line-height:20px;font-weight:bold;color:#0a0a8c;-webkit-text-stroke:0.35px #0a0a8c">Interior WO Editor:</span>
<div style="left:552px;top:97px;width:521px;height:21px;box-sizing:border-box;border:1px solid;border-color:#fff #a4a09c #a4a09c #fff"></div>
<div style="left:556px;top:100px;width:1px;height:16px;background:#808080"></div>
<div style="left:620px;top:100px;width:1px;height:16px;background:#a8a4a0"></div>
<div style="left:621px;top:100px;width:1px;height:16px;background:#f4f4f4"></div>
<div style="left:685px;top:100px;width:1px;height:16px;background:#a8a4a0"></div>
<div style="left:686px;top:100px;width:1px;height:16px;background:#f4f4f4"></div>
<div style="left:748px;top:100px;width:1px;height:16px;background:#a8a4a0"></div>
<div style="left:749px;top:100px;width:1px;height:16px;background:#f4f4f4"></div>
<div style="left:812px;top:100px;width:1px;height:16px;background:#a8a4a0"></div>
<div style="left:813px;top:100px;width:1px;height:16px;background:#f4f4f4"></div>
<div style="left:876px;top:100px;width:1px;height:16px;background:#a8a4a0"></div>
<div style="left:877px;top:100px;width:1px;height:16px;background:#f4f4f4"></div>
<div style="left:940px;top:100px;width:1px;height:16px;background:#a8a4a0"></div>
<div style="left:941px;top:100px;width:1px;height:16px;background:#f4f4f4"></div>
<span class="t" style="left:581px;top:102px;font-size:9.5px;line-height:11px;font-weight:normal;color:#000;">Refresh</span>
<span class="t" style="left:661.5px;top:102px;font-size:9.5px;line-height:11px;font-weight:normal;color:#000;">Add</span>
<span class="t" style="left:711.5px;top:102px;font-size:9.5px;line-height:11px;font-weight:normal;color:#a8a4a0;">Update</span>
<span class="t" style="left:778.6px;top:102px;font-size:9.5px;line-height:11px;font-weight:normal;color:#a8a4a0;">Delete</span>
<span class="t" style="left:839.4px;top:102px;font-size:9.5px;line-height:11px;font-weight:normal;color:#a8a4a0;">Comply</span>
<span class="t" style="left:921.5px;top:102px;font-size:9.5px;line-height:11px;font-weight:normal;color:#000;">PO</span>
<svg style="left:565px;top:101px" width="14" height="13"><path d="M3 3.5h5.5a3 3 0 0 1 0 6h-4.5" stroke="#000" stroke-width="2.6" fill="none"/><path d="M3 3.5h5.5a3 3 0 0 1 0 6h-4.5" stroke="#30d030" stroke-width="1.4" fill="none"/><path d="M0.5 3.5l3.5-3v6z" fill="#30d030" stroke="#000" stroke-width="0.8"/><path d="M3.5 11.5h4" stroke="#000" stroke-width="1.2"/></svg>
<svg style="left:629px;top:101px" width="14" height="14"><path d="M3.5 2.5h4l3 3v6.5h-7z" fill="#40e8e0" stroke="#000"/><circle cx="1" cy="6" r="0.7" fill="#333"/><circle cx="12.5" cy="1.5" r="0.7" fill="#333"/><circle cx="12.5" cy="7" r="0.7" fill="#333"/><circle cx="1.5" cy="12" r="0.7" fill="#333"/><circle cx="6" cy="13.5" r="0.7" fill="#333"/><path d="M11 11.5l2 2" stroke="#333"/><path d="M7 0.5v2" stroke="#333"/></svg>
<svg style="left:692px;top:101px" width="14" height="14"><path d="M0.5 0.5h5v5h-5z" fill="#b0aca8"/><path d="M2 1.5h2" stroke="#fff"/><path d="M5 6.5c3 0 4 1 4 3" stroke="#a8a4a0" stroke-width="1.4" fill="none"/><path d="M7 8.5l2 2 2-2" stroke="#a8a4a0" stroke-width="1.2" fill="none"/><path d="M3.5 9.5v4h9v-4" stroke="#a8a4a0" stroke-width="1.2" fill="none"/></svg>
<svg style="left:757px;top:101px" width="14" height="14"><path d="M0 0h14v14h-14z" fill="#8c8a88"/><path d="M3 2h1v11h-1z" fill="#fff"/></svg>
<svg style="left:820px;top:101px" width="14" height="13"><path d="M1.5 7.5l3.5 4.5 7.5-11" stroke="#8c8a88" stroke-width="2.6" fill="none"/></svg>
<svg style="left:884px;top:101px" width="15" height="14"><path d="M1 1.5h9l2 3h-10z" fill="#e89048" stroke="#804010" stroke-width="0.8"/><path d="M2 4.5h11v4h-11z" fill="#70d050" stroke="#306010" stroke-width="0.8"/><path d="M3 8.5h11l-1 4.5h-9z" fill="#d8a870" stroke="#604020" stroke-width="0.8"/></svg>
<span class="t" style="left:1118.7px;top:93px;font-size:13.5px;line-height:16px;font-weight:normal;color:#333;">Group:</span>
<div style="left:1075px;top:108px;width:141px;height:22px;background:#fff;box-sizing:border-box;border:1px solid;border-color:#808080 #fff #fff #808080;box-shadow:inset 1px 1px 0 #404040, inset -1px -1px 0 #d4d0c8"></div>
<div style="left:1199px;top:110px;width:15px;height:18px;background:#d4d0c8;box-sizing:border-box;border:1px solid;border-color:#fff #404040 #404040 #fff;box-shadow:inset -1px -1px 0 #808080"></div>
<svg style="left:1199px;top:110px" width="15" height="18"><path d="M4.0 7.5 h7 l-3.5 4 z" fill="#000"/></svg>
<span class="t" style="left:1078px;top:110px;font-size:14px;line-height:17px;font-weight:bold;color:#0c0ca6;">INTERIOR</span>
<div style="left:1220px;top:103px;width:156px;height:31px;background:#fff;box-sizing:border-box;border:1px solid #1a1a1a;box-shadow:inset 1px 1px 0 #555"></div>
<span class="t" style="left:1097px;width:400px;text-align:center;top:106px;font-size:20px;line-height:23px;font-weight:bold;color:#0c0ca6;">WS0004.08.24</span>
<span class="t" style="left:580px;top:137px;font-size:13.6px;line-height:16px;font-weight:normal;color:#333;">WO Date:</span>
<div style="left:674px;top:129px;width:43px;height:25px;background:#c8c8fa;box-sizing:border-box;border:1px solid;border-color:#fff #404040 #404040 #fff;box-shadow:inset -1px -1px 0 #808080"></div>
<svg style="left:688px;top:134px" width="15" height="15"><path d="M0.5 1.5h13v12h-13z" fill="#e8e8f0" stroke="#202040"/><path d="M0.5 0.5h13v3h-13z" fill="#1828a0"/><path d="M3.5 4v9 M6.5 4v9 M9.5 4v9 M0.5 6.5h13 M0.5 9.5h13" stroke="#a04040" stroke-width="1"/></svg>
<div style="left:561px;top:152px;width:113px;height:26px;background:#fff;box-sizing:border-box;border:1px solid #1a1a1a;box-shadow:inset 1px 1px 0 #555"></div>
<div style="left:673px;top:152px;width:73px;height:26px;background:#fff;box-sizing:border-box;border:1px solid #1a1a1a;box-shadow:inset 1px 1px 0 #555"></div>
<span class="t" style="left:418.29999999999995px;width:400px;text-align:center;top:154px;font-size:14px;line-height:17px;font-weight:bold;color:#0c0ca6;letter-spacing:-0.15px">15.08.20</span>
<span class="t" style="left:509.29999999999995px;width:400px;text-align:center;top:154px;font-size:14px;line-height:17px;font-weight:bold;color:#0c0ca6;">12:00</span>
<span class="t" style="left:895px;top:138px;font-size:13.3px;line-height:16px;font-weight:normal;color:#333;">Customer:</span>
<div style="left:750px;top:153px;width:366px;height:23px;background:#fff;box-sizing:border-box;border:1px solid;border-color:#808080 #fff #fff #808080;box-shadow:inset 1px 1px 0 #404040, inset -1px -1px 0 #d4d0c8"></div>
<div style="left:1099px;top:155px;width:15px;height:19px;background:#d4d0c8;box-sizing:border-box;border:1px solid;border-color:#fff #404040 #404040 #fff;box-shadow:inset -1px -1px 0 #808080"></div>
<svg style="left:1099px;top:155px" width="15" height="19"><path d="M4.0 8.0 h7 l-3.5 4 z" fill="#000"/></svg>
<span class="t" style="left:752.8px;top:156px;font-size:13.8px;line-height:16px;font-weight:bold;color:#0c0ca6;">AIREST AS</span>
<span class="t" style="left:1165px;top:138px;font-size:13.5px;line-height:16px;font-weight:normal;color:#333;">Customer Order Reference:</span>
<div style="left:1122px;top:153px;width:254px;height:25px;background:#fff;box-sizing:border-box;border:1px solid #1a1a1a;box-shadow:inset 1px 1px 0 #555"></div>
<span class="t" style="left:1048px;width:400px;text-align:center;top:156px;font-size:13.6px;line-height:16px;font-weight:bold;color:#0c0ca6;">Airest634/34-001</span>
<span class="t" style="left:656.7px;top:182px;font-size:13.5px;line-height:16px;font-weight:normal;color:#333;">PN:</span>
<div style="left:750px;top:178px;width:155px;height:21px;background:#fff;box-sizing:border-box;border:1px solid #1a1a1a;box-shadow:inset 1px 1px 0 #555"></div>
<span class="t" style="left:911px;top:182px;font-size:13.5px;line-height:16px;font-weight:normal;color:#333;">SN:</span>
<span class="t" style="left:1079px;top:182px;font-size:13.5px;line-height:16px;font-weight:normal;color:#333;">A/C Type:</span>
<div style="left:561px;top:198px;width:225px;height:22px;background:#fff;box-sizing:border-box;border:1px solid;border-color:#808080 #fff #fff #808080;box-shadow:inset 1px 1px 0 #404040, inset -1px -1px 0 #d4d0c8"></div>
<div style="left:769px;top:200px;width:15px;height:18px;background:#d4d0c8;box-sizing:border-box;border:1px solid;border-color:#fff #404040 #404040 #fff;box-shadow:inset -1px -1px 0 #808080"></div>
<svg style="left:769px;top:200px" width="15" height="18"><path d="M4.0 7.5 h7 l-3.5 4 z" fill="#000"/></svg>
<span class="t" style="left:563.5px;top:200px;font-size:14.2px;line-height:17px;font-weight:bold;color:#0c0ca6;">BA21783-X</span>
<div style="left:795px;top:198px;width:255px;height:25px;background:#fff;box-sizing:border-box;border:1px solid #1a1a1a;box-shadow:inset 1px 1px 0 #555"></div>
<span class="t" style="left:532.5px;width:400px;text-align:right;top:200px;font-size:13.5px;line-height:16px;font-weight:bold;color:#0c0ca6;">548</span>
<div style="left:933px;top:199px;width:1px;height:16px;background:#000"></div>
<div style="left:1052px;top:198px;width:126px;height:23px;background:#fff;box-sizing:border-box;border:1px solid;border-color:#808080 #fff #fff #808080;box-shadow:inset 1px 1px 0 #404040, inset -1px -1px 0 #d4d0c8"></div>
<div style="left:1161px;top:200px;width:15px;height:19px;background:#d4d0c8;box-sizing:border-box;border:1px solid;border-color:#fff #404040 #404040 #fff;box-shadow:inset -1px -1px 0 #808080"></div>
<svg style="left:1161px;top:200px" width="15" height="19"><path d="M4.0 8.0 h7 l-3.5 4 z" fill="#000"/></svg>
<span class="t" style="left:735.6px;top:225px;font-size:13.5px;line-height:16px;font-weight:normal;color:#333;">Description:</span>
<span class="t" style="left:1036.5px;top:225px;font-size:13.5px;line-height:16px;font-weight:normal;color:#333;">Contract Type:</span>
<span class="t" style="left:1192.9px;top:225px;font-size:13.5px;line-height:16px;font-weight:normal;color:#333;">A/C Reg:</span>
<span class="t" style="left:1294px;top:225px;font-size:13.5px;line-height:16px;font-weight:normal;color:#333;">Treatment:</span>
<div style="left:561px;top:241px;width:423px;height:25px;background:#fff;box-sizing:border-box;border:1px solid #1a1a1a;box-shadow:inset 1px 1px 0 #555"></div>
<span class="t" style="left:563.5px;top:242px;font-size:14px;line-height:17px;font-weight:bold;color:#0c0ca6;">BOTTLE FIREX CABIN</span>
<div style="left:989px;top:242px;width:183px;height:23px;background:#fff;box-sizing:border-box;border:1px solid;border-color:#808080 #fff #fff #808080;box-shadow:inset 1px 1px 0 #404040, inset -1px -1px 0 #d4d0c8"></div>
<div style="left:1155px;top:244px;width:15px;height:19px;background:#d4d0c8;box-sizing:border-box;border:1px solid;border-color:#fff #404040 #404040 #fff;box-shadow:inset -1px -1px 0 #808080"></div>
<svg style="left:1155px;top:244px" width="15" height="19"><path d="M4.0 8.0 h7 l-3.5 4 z" fill="#000"/></svg>
<div style="left:1178px;top:242px;width:98px;height:22px;background:#fff;box-sizing:border-box;border:1px solid;border-color:#808080 #fff #fff #808080;box-shadow:inset 1px 1px 0 #404040, inset -1px -1px 0 #d4d0c8"></div>
<div style="left:1259px;top:244px;width:15px;height:18px;background:#d4d0c8;box-sizing:border-box;border:1px solid;border-color:#fff #404040 #404040 #fff;box-shadow:inset -1px -1px 0 #808080"></div>
<svg style="left:1259px;top:244px" width="15" height="18"><path d="M4.0 7.5 h7 l-3.5 4 z" fill="#000"/></svg>
<span class="t" style="left:1181px;top:246px;font-size:12px;line-height:14px;font-weight:bold;color:#0c0ca6;">-</span>
<div style="left:1290px;top:242px;width:84px;height:22px;background:#fff;box-sizing:border-box;border:1px solid;border-color:#808080 #fff #fff #808080;box-shadow:inset 1px 1px 0 #404040, inset -1px -1px 0 #d4d0c8"></div>
<div style="left:1357px;top:244px;width:15px;height:18px;background:#d4d0c8;box-sizing:border-box;border:1px solid;border-color:#fff #404040 #404040 #fff;box-shadow:inset -1px -1px 0 #808080"></div>
<svg style="left:1357px;top:244px" width="15" height="18"><path d="M4.0 7.5 h7 l-3.5 4 z" fill="#000"/></svg>
<div style="left:561px;top:284px;width:324px;height:76px;box-sizing:border-box;border:1px solid #808080;box-shadow:1px 1px 0 #fff, inset 1px 1px 0 #fff"></div>
<div style="left:566px;top:279px;width:122px;height:14px;background:#d4d0c8"></div>
<span class="t" style="left:569.6px;top:276px;font-size:14px;line-height:17px;font-weight:bold;color:#111;">Requested Work:</span>
<div style="left:575px;top:297px;width:309px;height:59px;background:#fff;box-sizing:border-box;border:1px solid;border-color:#808080 #fff #fff #808080;box-shadow:inset 1px 1px 0 #404040, inset -1px -1px 0 #d4d0c8"></div>
<div style="left:885px;top:284px;width:490px;height:76px;box-sizing:border-box;border:1px solid #808080;box-shadow:1px 1px 0 #fff, inset 1px 1px 0 #fff"></div>
<div style="left:889px;top:279px;width:147px;height:14px;background:#d4d0c8"></div>
<span class="t" style="left:892px;top:276px;font-size:14px;line-height:17px;font-weight:bold;color:#111;">Reason for Removal:</span>
<div style="left:897px;top:297px;width:465px;height:59px;background:#fff;box-sizing:border-box;border:1px solid;border-color:#808080 #fff #fff #808080;box-shadow:inset 1px 1px 0 #404040, inset -1px -1px 0 #d4d0c8"></div>
<div style="left:1347px;top:298px;width:14px;height:57px;background:#ecebe8"></div>
<div style="left:1347px;top:298px;width:14px;height:14px;background:#d4d0c8;box-sizing:border-box;border:1px solid;border-color:#fff #404040 #404040 #fff;box-shadow:inset -1px -1px 0 #808080"></div>
<svg style="left:1347px;top:298px" width="14" height="14"><path d="M7 4.5l-4 4h8z" fill="#808080"/></svg>
<div style="left:1347px;top:341px;width:14px;height:14px;background:#d4d0c8;box-sizing:border-box;border:1px solid;border-color:#fff #404040 #404040 #fff;box-shadow:inset -1px -1px 0 #808080"></div>
<svg style="left:1347px;top:341px" width="14" height="14"><path d="M7 9.5l-4-4h8z" fill="#808080"/></svg>
<div style="left:561px;top:361px;width:688px;height:147px;background:#c8c6ca"></div>
<div style="left:561px;top:370px;width:687px;height:138px;box-sizing:border-box;border:1px solid #808080;box-shadow:1px 1px 0 #fff, inset 1px 1px 0 #fff"></div>
<div style="left:566px;top:363px;width:130px;height:14px;background:#c8c6ca"></div>
<span class="t" style="left:569.6px;top:361px;font-size:14px;line-height:17px;font-weight:bold;color:#111;">Supplemental PN:</span>
<div style="left:576px;top:376px;width:560px;height:125px;background:#858285;box-sizing:border-box;border:1px solid;border-color:#404040 #fff #fff #404040"></div>
<div style="left:577px;top:377px;width:234px;height:16px;background:#d4d0c8;box-sizing:border-box;border:1px solid;border-color:#fff #404040 #404040 #fff;box-shadow:inset -1px -1px 0 #808080"></div>
<span class="t" style="left:580px;top:380px;font-size:10.4px;line-height:12px;font-weight:normal;color:#333;">Select WO !</span>
<div style="left:1150px;top:382px;width:86px;height:22px;background:#c8c8fa;box-sizing:border-box;border:1px solid;border-color:#fff #404040 #404040 #fff;box-shadow:inset -1px -1px 0 #808080"></div>
<span class="t" style="left:993px;width:400px;text-align:center;top:386px;font-size:13.6px;line-height:16px;font-weight:normal;color:#8884a8;">Add</span>
<div style="left:1150px;top:413px;width:86px;height:22px;background:#c8c8fa;box-sizing:border-box;border:1px solid;border-color:#fff #404040 #404040 #fff;box-shadow:inset -1px -1px 0 #808080"></div>
<span class="t" style="left:993px;width:400px;text-align:center;top:418px;font-size:13.6px;line-height:16px;font-weight:normal;color:#8884a8;">Update</span>
<div style="left:1150px;top:445px;width:86px;height:22px;background:#fcc4c8;box-sizing:border-box;border:1px solid;border-color:#fff #404040 #404040 #fff;box-shadow:inset -1px -1px 0 #808080"></div>
<span class="t" style="left:993px;width:400px;text-align:center;top:450px;font-size:13.6px;line-height:16px;font-weight:normal;color:#b89898;">Delete</span>
<div style="left:1262px;top:368.5px;width:11px;height:11px;background:#fff;box-sizing:border-box;border:1px solid;border-color:#808080 #fff #fff #808080;box-shadow:inset 1px 1px 0 #404040, inset -1px -1px 0 #d4d0c8"></div>
<svg style="left:1262px;top:368.5px" width="11" height="11"><path d="M2.5 5 L4.5 7.5 L8.5 2.5" stroke="#000" stroke-width="1.6" fill="none"/></svg>
<span class="t" style="left:1278.4px;top:368px;font-size:12.2px;line-height:15px;font-weight:normal;color:#222;">Received</span>
<div style="left:1262px;top:386.0px;width:11px;height:11px;background:#fff;box-sizing:border-box;border:1px solid;border-color:#808080 #fff #fff #808080;box-shadow:inset 1px 1px 0 #404040, inset -1px -1px 0 #d4d0c8"></div>
<svg style="left:1262px;top:386.0px" width="11" height="11"><path d="M2.5 5 L4.5 7.5 L8.5 2.5" stroke="#000" stroke-width="1.6" fill="none"/></svg>
<span class="t" style="left:1278.4px;top:385px;font-size:12.2px;line-height:15px;font-weight:normal;color:#222;">Disassembly</span>
<div style="left:1262px;top:403.5px;width:11px;height:11px;background:#fff;box-sizing:border-box;border:1px solid;border-color:#808080 #fff #fff #808080;box-shadow:inset 1px 1px 0 #404040, inset -1px -1px 0 #d4d0c8"></div>
<svg style="left:1262px;top:403.5px" width="11" height="11"><path d="M2.5 5 L4.5 7.5 L8.5 2.5" stroke="#000" stroke-width="1.6" fill="none"/></svg>
<span class="t" style="left:1278.4px;top:402px;font-size:12.2px;line-height:15px;font-weight:normal;color:#222;">Cleaning</span>
<div style="left:1262px;top:421.0px;width:11px;height:11px;background:#fff;box-sizing:border-box;border:1px solid;border-color:#808080 #fff #fff #808080;box-shadow:inset 1px 1px 0 #404040, inset -1px -1px 0 #d4d0c8"></div>
<svg style="left:1262px;top:421.0px" width="11" height="11"><path d="M2.5 5 L4.5 7.5 L8.5 2.5" stroke="#000" stroke-width="1.6" fill="none"/></svg>
<span class="t" style="left:1278.4px;top:420px;font-size:12.2px;line-height:15px;font-weight:normal;color:#222;">Paint Removal</span>
<div style="left:1262px;top:438.5px;width:11px;height:11px;background:#fff;box-sizing:border-box;border:1px solid;border-color:#808080 #fff #fff #808080;box-shadow:inset 1px 1px 0 #404040, inset -1px -1px 0 #d4d0c8"></div>
<svg style="left:1262px;top:438.5px" width="11" height="11"><path d="M2.5 5 L4.5 7.5 L8.5 2.5" stroke="#000" stroke-width="1.6" fill="none"/></svg>
<span class="t" style="left:1278.4px;top:438px;font-size:12.2px;line-height:15px;font-weight:normal;color:#222;">Inspection</span>
<div style="left:1262px;top:456.0px;width:11px;height:11px;background:#fff;box-sizing:border-box;border:1px solid;border-color:#808080 #fff #fff #808080;box-shadow:inset 1px 1px 0 #404040, inset -1px -1px 0 #d4d0c8"></div>
<svg style="left:1262px;top:456.0px" width="11" height="11"><path d="M2.5 5 L4.5 7.5 L8.5 2.5" stroke="#000" stroke-width="1.6" fill="none"/></svg>
<span class="t" style="left:1278.4px;top:455px;font-size:12.2px;line-height:15px;font-weight:normal;color:#222;">NDT</span>
<div style="left:1262px;top:473.5px;width:11px;height:11px;background:#fff;box-sizing:border-box;border:1px solid;border-color:#808080 #fff #fff #808080;box-shadow:inset 1px 1px 0 #404040, inset -1px -1px 0 #d4d0c8"></div>
<svg style="left:1262px;top:473.5px" width="11" height="11"><path d="M2.5 5 L4.5 7.5 L8.5 2.5" stroke="#000" stroke-width="1.6" fill="none"/></svg>
<span class="t" style="left:1278.4px;top:472px;font-size:12.2px;line-height:15px;font-weight:normal;color:#222;">Repair</span>
<div style="left:1262px;top:491.0px;width:11px;height:11px;background:#fff;box-sizing:border-box;border:1px solid;border-color:#808080 #fff #fff #808080;box-shadow:inset 1px 1px 0 #404040, inset -1px -1px 0 #d4d0c8"></div>
<svg style="left:1262px;top:491.0px" width="11" height="11"><path d="M2.5 5 L4.5 7.5 L8.5 2.5" stroke="#000" stroke-width="1.6" fill="none"/></svg>
<span class="t" style="left:1278.4px;top:490px;font-size:12.2px;line-height:15px;font-weight:normal;color:#222;">Painting</span>
<div style="left:1262px;top:508.5px;width:11px;height:11px;background:#fff;box-sizing:border-box;border:1px solid;border-color:#808080 #fff #fff #808080;box-shadow:inset 1px 1px 0 #404040, inset -1px -1px 0 #d4d0c8"></div>
<svg style="left:1262px;top:508.5px" width="11" height="11"><path d="M2.5 5 L4.5 7.5 L8.5 2.5" stroke="#000" stroke-width="1.6" fill="none"/></svg>
<span class="t" style="left:1278.4px;top:508px;font-size:12.2px;line-height:15px;font-weight:normal;color:#222;">Assembly</span>
<div style="left:562px;top:515px;width:11px;height:11px;background:#fff;box-sizing:border-box;border:1px solid;border-color:#808080 #fff #fff #808080;box-shadow:inset 1px 1px 0 #404040, inset -1px -1px 0 #d4d0c8"></div>
<svg style="left:562px;top:515px" width="11" height="11"><path d="M2.5 5 L4.5 7.5 L8.5 2.5" stroke="#000" stroke-width="1.6" fill="none"/></svg>
<span class="t" style="left:578.5px;top:512px;font-size:13.9px;line-height:16px;font-weight:bold;color:#111;">Strip Down</span>
<div style="left:688px;top:515px;width:11px;height:11px;background:#fff;box-sizing:border-box;border:1px solid;border-color:#808080 #fff #fff #808080;box-shadow:inset 1px 1px 0 #404040, inset -1px -1px 0 #d4d0c8"></div>
<span class="t" style="left:704.7px;top:512px;font-size:13.9px;line-height:16px;font-weight:bold;color:#8c0c14;">On Hold</span>
<div style="left:562px;top:541px;width:11px;height:11px;background:#fff;box-sizing:border-box;border:1px solid;border-color:#808080 #fff #fff #808080;box-shadow:inset 1px 1px 0 #404040, inset -1px -1px 0 #d4d0c8"></div>
<span class="t" style="left:580.3px;top:536px;font-size:17.6px;line-height:21px;font-weight:bold;color:#8c0c14;">AOG</span>
<div style="left:641px;top:541px;width:11px;height:11px;background:#fff;box-sizing:border-box;border:1px solid;border-color:#808080 #fff #fff #808080;box-shadow:inset 1px 1px 0 #404040, inset -1px -1px 0 #d4d0c8"></div>
<span class="t" style="left:657.8px;top:537px;font-size:13.9px;line-height:16px;font-weight:bold;color:#5a0e10;">Urgent</span>
<div style="left:725.5px;top:541px;width:11px;height:11px;background:#fff;box-sizing:border-box;border:1px solid;border-color:#808080 #fff #fff #808080;box-shadow:inset 1px 1px 0 #404040, inset -1px -1px 0 #d4d0c8"></div>
<svg style="left:725.5px;top:541px" width="11" height="11"><path d="M2.5 5 L4.5 7.5 L8.5 2.5" stroke="#000" stroke-width="1.6" fill="none"/></svg>
<span class="t" style="left:742px;top:539px;font-size:13.8px;line-height:16px;font-weight:bold;color:#111;">Routine</span>
<span class="t" style="left:817.8px;top:512px;font-size:13.7px;line-height:16px;font-weight:normal;color:#333;">DeadLine:</span>
<div style="left:913px;top:508px;width:36px;height:22px;background:#c8c8fa;box-sizing:border-box;border:1px solid;border-color:#fff #404040 #404040 #fff;box-shadow:inset -1px -1px 0 #808080"></div>
<svg style="left:922px;top:511px" width="15" height="15"><path d="M0.5 1.5h13v12h-13z" fill="#e8e8f0" stroke="#202040"/><path d="M0.5 0.5h13v3h-13z" fill="#1828a0"/><path d="M3.5 4v9 M6.5 4v9 M9.5 4v9 M0.5 6.5h13 M0.5 9.5h13" stroke="#a04040" stroke-width="1"/></svg>
<div style="left:820px;top:528px;width:128px;height:26px;background:#fff;box-sizing:border-box;border:1px solid;border-color:#808080 #fff #fff #808080;box-shadow:inset 1px 1px 0 #404040, inset -1px -1px 0 #d4d0c8"></div>
<span class="t" style="left:953.9px;top:512px;font-size:13.4px;line-height:16px;font-weight:normal;color:#333;">Originator:</span>
<span class="t" style="left:1186.4px;top:514px;font-size:13.2px;line-height:16px;font-weight:normal;color:#333;">Name:</span>
<div style="left:952px;top:528px;width:69px;height:23px;background:#fff;box-sizing:border-box;border:1px solid;border-color:#808080 #fff #fff #808080;box-shadow:inset 1px 1px 0 #404040, inset -1px -1px 0 #d4d0c8"></div>
<div style="left:1004px;top:530px;width:15px;height:19px;background:#d4d0c8;box-sizing:border-box;border:1px solid;border-color:#fff #404040 #404040 #fff;box-shadow:inset -1px -1px 0 #808080"></div>
<svg style="left:1004px;top:530px" width="15" height="19"><path d="M4.0 8.0 h7 l-3.5 4 z" fill="#000"/></svg>
<div style="left:1024px;top:528px;width:352px;height:25px;background:#e8e4e8;box-sizing:border-box;border:1px solid;border-color:#404040 #808080 #808080 #404040"></div>
<div style="left:547px;top:567px;width:393px;height:150px;box-sizing:border-box;border:1px solid #808080;box-shadow:1px 1px 0 #fff, inset 1px 1px 0 #fff"></div>
<div style="left:553px;top:560px;width:225px;height:14px;background:#d4d0c8"></div>
<span class="t" style="left:555.7px;top:560px;font-size:12px;line-height:14px;font-weight:bold;color:#101060;letter-spacing:0.39px">Spare Parts Required for Treatment:</span>
<div style="left:562px;top:582px;width:364px;height:124px;background:#858285;box-sizing:border-box;border:1px solid;border-color:#404040 #fff #fff #404040"></div>
<div style="left:563px;top:583px;width:235px;height:17px;background:#d4d0c8;box-sizing:border-box;border:1px solid;border-color:#fff #404040 #404040 #fff;box-shadow:inset -1px -1px 0 #808080"></div>
<span class="t" style="left:566.7px;top:585px;font-size:12.3px;line-height:15px;font-weight:normal;color:#333;">No Selection !</span>
<div style="left:941px;top:567px;width:435px;height:150px;box-sizing:border-box;border:1px solid #808080;box-shadow:1px 1px 0 #fff, inset 1px 1px 0 #fff"></div>
<div style="left:945px;top:560px;width:162px;height:14px;background:#d4d0c8"></div>
<span class="t" style="left:947.3px;top:560px;font-size:12px;line-height:14px;font-weight:bold;color:#101060;letter-spacing:0.43px">CMM Manual Information:</span>
<div style="left:955px;top:582px;width:405px;height:124px;background:#858285;box-sizing:border-box;border:1px solid;border-color:#404040 #fff #fff #404040"></div>
<div style="left:956px;top:583px;width:235px;height:17px;background:#d4d0c8;box-sizing:border-box;border:1px solid;border-color:#fff #404040 #404040 #fff;box-shadow:inset -1px -1px 0 #808080"></div>
<span class="t" style="left:959px;top:585px;font-size:12.3px;line-height:15px;font-weight:normal;color:#333;">No Selection !</span>
<span class="t" style="left:1165px;top:93px;font-size:12.5px;line-height:15px;font-weight:normal;color:#d81e1e;">*</span>
<span class="t" style="left:659px;top:137px;font-size:12.5px;line-height:15px;font-weight:normal;color:#d81e1e;">*</span>
<span class="t" style="left:967px;top:137px;font-size:12.5px;line-height:15px;font-weight:normal;color:#d81e1e;">*</span>
<span class="t" style="left:1359px;top:138px;font-size:12.5px;line-height:15px;font-weight:normal;color:#d81e1e;">*</span>
<span class="t" style="left:701px;top:182px;font-size:12.5px;line-height:15px;font-weight:normal;color:#d81e1e;">*</span>
<span class="t" style="left:952px;top:182px;font-size:12.5px;line-height:15px;font-weight:normal;color:#d81e1e;">*</span>
<span class="t" style="left:841px;top:226px;font-size:12.5px;line-height:15px;font-weight:normal;color:#d81e1e;">*</span>
<span class="t" style="left:1148px;top:225px;font-size:12.5px;line-height:15px;font-weight:normal;color:#d81e1e;">*</span>
<span class="t" style="left:1261px;top:225px;font-size:12.5px;line-height:15px;font-weight:normal;color:#d81e1e;">*</span>
<span class="t" style="left:1369px;top:225px;font-size:12.5px;line-height:15px;font-weight:normal;color:#d81e1e;">*</span>
<div style="left:728px;top:279px;width:8px;height:7px;background:#d4d0c8"></div>
<span class="t" style="left:729px;top:278px;font-size:12.5px;line-height:15px;font-weight:normal;color:#d81e1e;">*</span>
<div style="left:1078px;top:279px;width:8px;height:7px;background:#d4d0c8"></div>
<span class="t" style="left:1079px;top:278px;font-size:12.5px;line-height:15px;font-weight:normal;color:#d81e1e;">*</span>
<span class="t" style="left:893px;top:513px;font-size:12.5px;line-height:15px;font-weight:normal;color:#d81e1e;">*</span>
<span class="t" style="left:1034px;top:514px;font-size:12.5px;line-height:15px;font-weight:normal;color:#d81e1e;">*</span>
<svg style="left:1100px;top:150px" width="130" height="160"><path d="M114 13 L28.9 105.6 L37 129.5 L60.8 133 Z" fill="#0896fc"/><circle cx="37" cy="129.5" r="22.6" fill="#0896fc" stroke="#141414" stroke-width="1.5"/><circle cx="37" cy="129.5" r="21.3" fill="none" stroke="#d8f0ff" stroke-width="0.7"/><text x="37.2" y="138.7" text-anchor="middle" font-family="Liberation Sans" font-weight="bold" font-size="22.5" fill="#fff" stroke="#fff" stroke-width="0.5">8</text></svg>
</body></html>
